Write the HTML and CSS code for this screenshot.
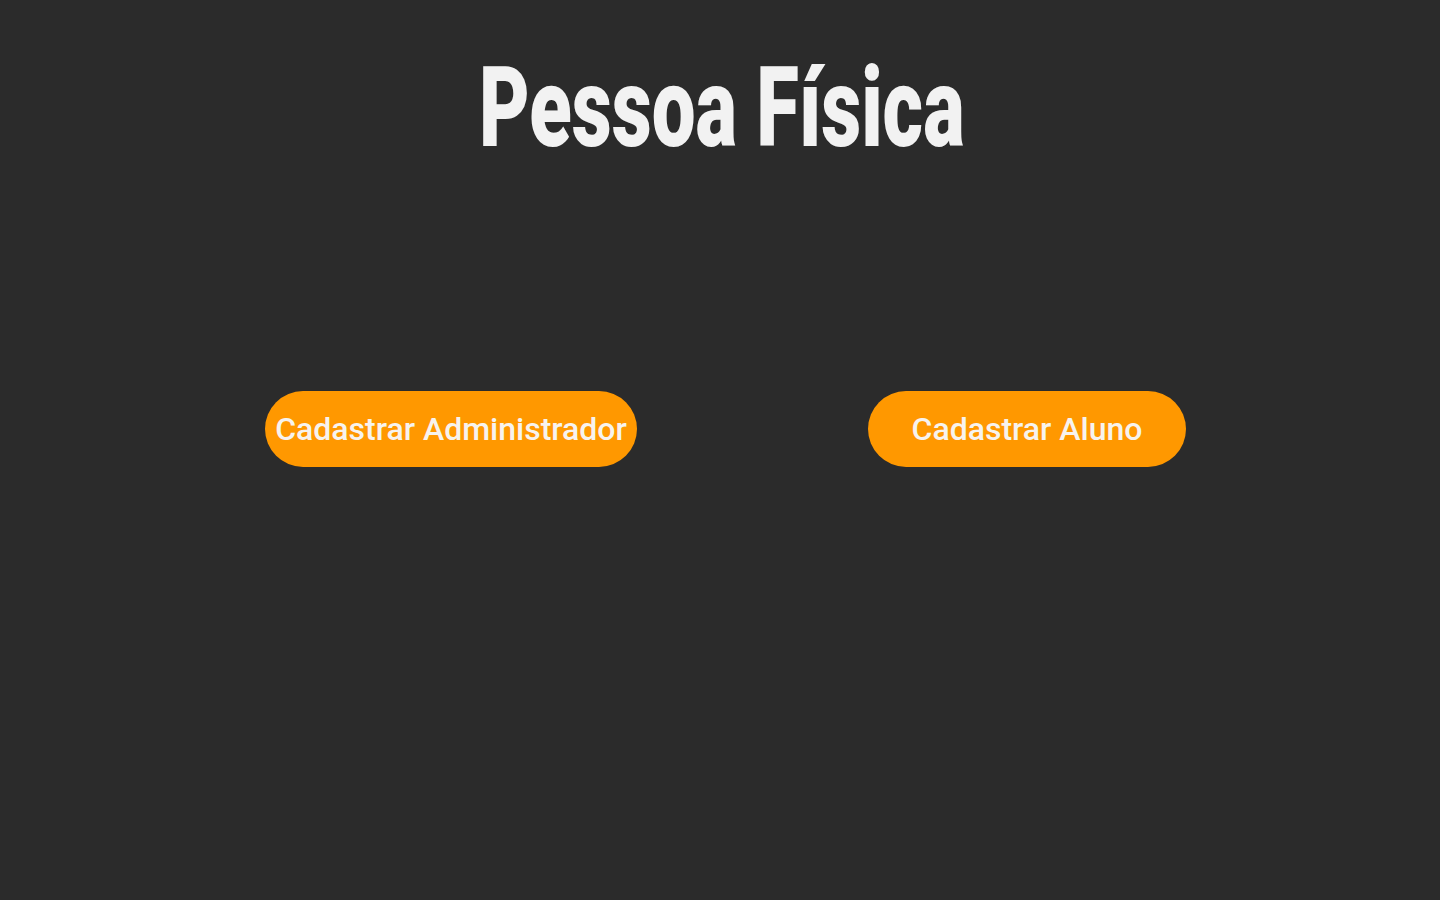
FILE: index.html
```html
<!DOCTYPE html>
<html lang="pt-BR">
<head>
<meta charset="utf-8">
<title>Pessoa Física</title>
<link rel="stylesheet" href="styles.css">
</head>
<body>
<main class="page">
  <header class="hero">
    <h1 class="title">Pessoa Física</h1>
  </header>
  <section class="actions">
    <div class="action-col">
      <a class="btn" href="#">Cadastrar Administrador</a>
    </div>
    <div class="action-col">
      <a class="btn" href="#">Cadastrar Aluno</a>
    </div>
  </section>
</main>
</body>
</html>
```
FILE: styles.css
```css
html, body {
  margin: 0;
  padding: 0;
  background: #2b2b2b;
  height: 100%;
}
.page {
  min-height: 900px;
  display: flex;
  flex-direction: column;
}
.hero {
  display: flex;
  justify-content: center;
  padding-top: 52px;
  padding-left: 3px;
}
.title {
  margin: 0;
  font-family: Roboto, "Liberation Sans", sans-serif;
  font-weight: 900;
  font-size: 112px;
  line-height: 112px;
  color: #f2f2f2;
  transform: scaleX(0.696);
  white-space: nowrap;
}
.actions {
  display: grid;
  grid-template-columns: 576px 576px;
  padding-left: 163px;
  margin-top: 227px;
}
.action-col {
  display: flex;
  justify-content: center;
}
.btn {
  box-sizing: border-box;
  min-width: 318px;
  height: 76px;
  padding: 0 10px;
  border-radius: 38px;
  background: #ff9800;
  color: #f7f3ee;
  font-family: Roboto, "Liberation Sans", sans-serif;
  font-weight: 500;
  font-size: 32px;
  text-decoration: none;
  display: flex;
  align-items: center;
  justify-content: center;
}
```
